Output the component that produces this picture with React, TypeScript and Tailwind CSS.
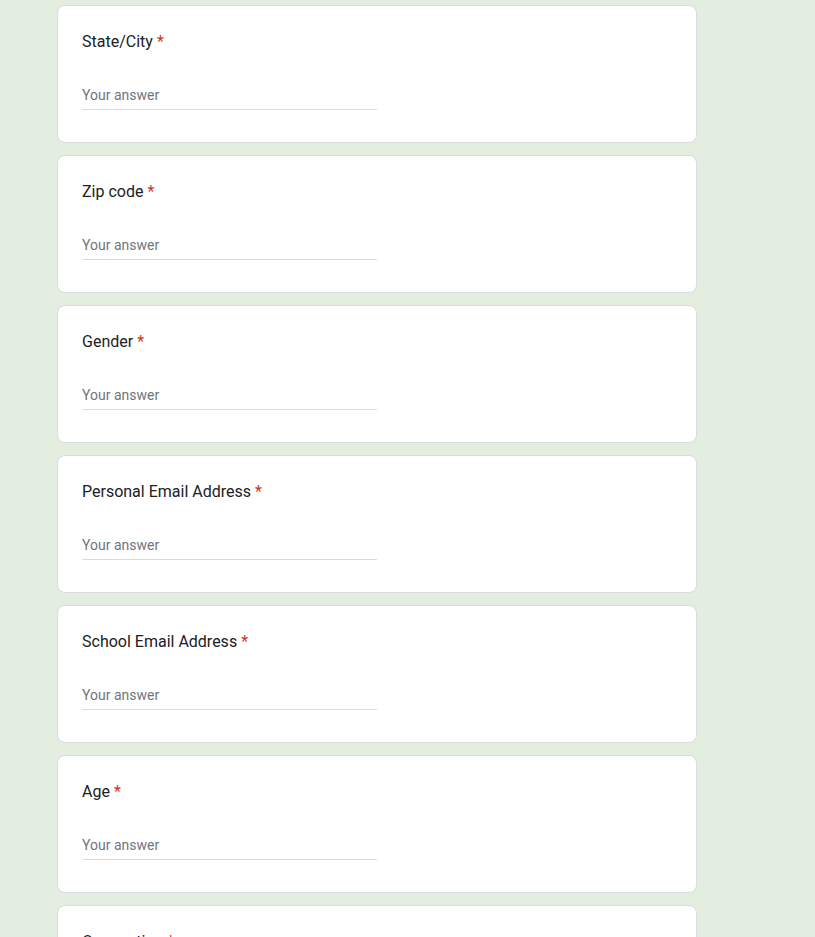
import React from 'react';

const questions = [
  'State/City',
  'Zip code',
  'Gender',
  'Personal Email Address',
  'School Email Address',
  'Age',
  'Occupation',
];

const QuestionCard: React.FC<{ title: string }> = ({ title }) => (
  <div className="w-[640px] bg-white border border-[#dadce0] rounded-lg px-6 pt-6 pb-8">
    <div className="h-6 text-[16px] leading-6 text-[#202124]">
      {title}
      <span className="text-[#d93025] pl-1">*</span>
    </div>
    <div className="mt-[31px] w-[295px] border-b border-[#dadce0] pb-1">
      <input
        type="text"
        placeholder="Your answer"
        className="block h-5 w-full text-[14px] leading-5 text-[#202124] placeholder:text-[#70757a] outline-none bg-transparent"
      />
    </div>
  </div>
);

export default function App() {
  return (
    <div
      className="h-[937px] overflow-hidden bg-[#e3ede0] pl-[57px] pt-[5px]"
      style={{ fontFamily: 'Roboto, "Noto Sans", Arial, sans-serif' }}
    >
      <div className="flex flex-col gap-3">
        {questions.map((q) => (
          <QuestionCard key={q} title={q} />
        ))}
      </div>
    </div>
  );
}
